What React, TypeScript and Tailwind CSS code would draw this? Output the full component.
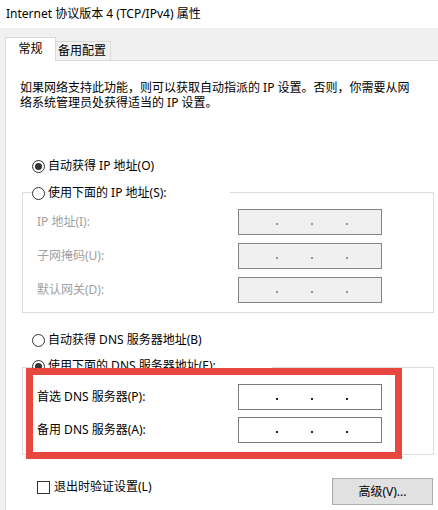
import React from "react";

const font = "font-['Noto_Sans','Noto_Sans_CJK_SC',sans-serif]";

function Radio({ checked }: { checked?: boolean }) {
  return (
    <span className="flex h-[13px] w-[13px] shrink-0 items-center justify-center rounded-full border border-[#333333] bg-white">
      {checked && <span className="h-[7px] w-[7px] rounded-full bg-[#333333]" />}
    </span>
  );
}

function IpBox({ disabled }: { disabled?: boolean }) {
  return (
    <div
      className={
        "flex h-[26px] w-[144px] items-center gap-[33px] border pl-[37px] " +
        (disabled ? "border-[#838383] bg-[#f0f0f0]" : "border-[#7a7a7a] bg-white")
      }
    >
      {[0, 1, 2].map((i) => (
        <span
          key={i}
          className={"mt-[4px] h-[2px] w-[2px] " + (disabled ? "bg-[#8a94a6]" : "bg-[#222222]")}
        />
      ))}
    </div>
  );
}

function FieldRow({ label, disabled }: { label: string; disabled?: boolean }) {
  return (
    <div className="flex h-[26px] items-center">
      <span className={"w-[201px] " + (disabled ? "text-[#a0a0a0]" : "text-black")}>{label}</span>
      <IpBox disabled={disabled} />
    </div>
  );
}

export default function App() {
  return (
    <div className={`relative h-[510px] w-[438px] overflow-hidden bg-[#f0f0f0] text-[12px] leading-[14px] text-black ${font}`}>
      {/* Title bar */}
      <div className="flex h-[28px] items-center bg-white pl-[6px]">
        Internet 协议版本 4 (TCP/IPv4) 属性
      </div>

      {/* Tabs */}
      <div className="flex h-[32px] items-end pl-[5px]">
        <div className="relative z-10 -mb-px flex h-[24px] w-[51px] items-center justify-center border border-b-0 border-[#d9d9d9] bg-white pb-[2px]">
          常规
        </div>
        <div className="flex h-[19px] w-[55px] items-center justify-center border border-b-0 border-l-0 border-[#d9d9d9] bg-[#f0f0f0] pr-[2px]">
          备用配置
        </div>
      </div>

      {/* Panel */}
      <div className="ml-[5px] h-[450px] border-l border-t border-[#d9d9d9] bg-white">
        <p className="mt-[19px] pl-[14px] leading-[15px]">
          如果网络支持此功能，则可以获取自动指派的 IP 设置。否则，你需要从网
          <br />
          络系统管理员处获得适当的 IP 设置。
        </p>

        <div className="ml-[26px] mt-[47px] flex h-[18px] items-center gap-[3px]">
          <Radio checked />
          <span>自动获得 IP 地址(O)</span>
        </div>

        <div className="relative z-10 ml-[26px] mt-[9px] flex h-[18px] w-[198px] items-center gap-[3px] bg-white">
          <Radio />
          <span>使用下面的 IP 地址(S):</span>
        </div>
        <div className="-mt-[10px] ml-[16px] flex w-[412px] flex-col gap-[8px] border border-[#dcdcdc] pb-[9px] pl-[14px] pt-[16px]">
          <FieldRow label="IP 地址(I):" disabled />
          <FieldRow label="子网掩码(U):" disabled />
          <FieldRow label="默认网关(D):" disabled />
        </div>

        <div className="ml-[26px] mt-[18px] flex h-[18px] items-center gap-[3px]">
          <Radio />
          <span>自动获得 DNS 服务器地址(B)</span>
        </div>

        <div className="relative z-10 ml-[26px] mt-[8px] flex h-[18px] w-[240px] items-center gap-[3px] bg-white">
          <Radio checked />
          <span>使用下面的 DNS 服务器地址(E):</span>
        </div>
        <div className="-mt-[8px] ml-[16px] flex w-[412px] flex-col gap-[7px] border border-[#dcdcdc] pb-[11px] pl-[14px] pt-[16px]">
          <FieldRow label="首选 DNS 服务器(P):" />
          <FieldRow label="备用 DNS 服务器(A):" />
        </div>

        {/* Bottom row */}
        <div className="mt-[23px] flex items-start pr-[5px]">
          <div className="ml-[31px] mt-[2px] flex h-[14px] items-center gap-[4px]">
            <span className="h-[13px] w-[13px] border border-[#333333] bg-white" />
            <span>退出时验证设置(L)</span>
          </div>
          <button className="ml-auto flex h-[27px] w-[101px] items-center justify-center border border-[#adadad] bg-[#e1e1e1]">
            高级(V)...
          </button>
        </div>
      </div>

      {/* Red annotation */}
      <div className="pointer-events-none absolute left-[26px] top-[368px] z-20 h-[91px] w-[376px] border-[7px] border-[#e8473f]" />
    </div>
  );
}
